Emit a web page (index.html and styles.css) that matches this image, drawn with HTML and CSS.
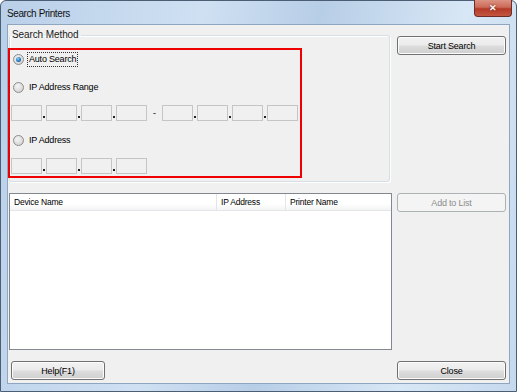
FILE: index.html
```html
<!DOCTYPE html>
<html lang="en">

<head>
    <meta charset="UTF-8">
    <title>Search Printers</title>
    <link rel="stylesheet" href="styles.css">
</head>

<body>

    <div class="window">

        <!-- title bar -->
        <div class="titlebar">
            <span class="title">Search Printers</span>
            <div class="close_x">&#x2715;</div>
        </div>

        <div class="client">

            <!-- search method -->
            <fieldset class="group">
                <legend>Search Method</legend>
                <div class="mark">
                    <div class="opt opt1">
                        <span class="radio on"></span>
                        <span class="label focus">Auto Search</span>
                    </div>
                    <div class="opt opt2">
                        <span class="radio"></span>
                        <span class="label">IP Address Range</span>
                    </div>
                    <div class="ip_row ip1">
                        <span class="ip_box"></span><span class="dot"></span>
                        <span class="ip_box"></span><span class="dot"></span>
                        <span class="ip_box"></span><span class="dot"></span>
                        <span class="ip_box"></span>
                        <span class="dash">-</span>
                        <span class="ip_box"></span><span class="dot"></span>
                        <span class="ip_box"></span><span class="dot"></span>
                        <span class="ip_box"></span><span class="dot"></span>
                        <span class="ip_box"></span>
                    </div>
                    <div class="opt opt3">
                        <span class="radio"></span>
                        <span class="label">IP Address</span>
                    </div>
                    <div class="ip_row ip2">
                        <span class="ip_box"></span><span class="dot"></span>
                        <span class="ip_box"></span><span class="dot"></span>
                        <span class="ip_box"></span><span class="dot"></span>
                        <span class="ip_box"></span>
                    </div>
                </div>
            </fieldset>

            <div class="side side_top">
                <button class="btn">Start Search</button>
            </div>

            <!-- device list -->
            <div class="listview">
                <div class="list_head">
                    <div class="col col1">Device Name</div>
                    <div class="col col2">IP Address</div>
                    <div class="col col3">Printer Name</div>
                </div>
            </div>

            <div class="side">
                <button class="btn" disabled>Add to List</button>
            </div>

            <div class="bottom">
                <button class="btn help">Help(F1)</button>
            </div>

            <div class="side">
                <button class="btn">Close</button>
            </div>

        </div>
    </div>

</body>

</html>
```

FILE: styles.css
```css
* {
    box-sizing: border-box;
}

body {
    margin: 0;
    font-family: "Liberation Sans", Arial, sans-serif;
    font-size: 9px;
    letter-spacing: -0.2px;
    color: #000;
}

.window {
    width: 517px;
    height: 392px;
    border: 1px solid #4b5e73;
    border-radius: 6px 6px 0 0;
    background: linear-gradient(100deg, #b9d0e9 0%, #cfe0f2 35%, #b7cee7 55%, #d8e7f5 80%, #c5d9ee 100%);
    display: flex;
    flex-direction: column;
}

/* title bar */
.titlebar {
    height: 23px;
    display: flex;
    justify-content: space-between;
    align-items: flex-start;
}

.title {
    font-size: 10px;
    letter-spacing: -0.4px;
    margin-left: 6px;
    margin-top: 7px;
    color: #111;
}

.close_x {
    width: 38px;
    height: 17px;
    margin-top: -1px;
    margin-right: 4px;
    border: 1px solid #6e2c28;
    border-top: none;
    border-radius: 0 0 4px 4px;
    background: linear-gradient(#dc9383 0%, #cc6a58 45%, #b43a28 55%, #c35640 100%);
    color: #fff;
    font-size: 9px;
    font-weight: bold;
    text-align: center;
    line-height: 16px;
    text-shadow: 0 0 2px #5a1a12;
}

/* client area */
.client {
    flex: 1;
    margin: 0 6px 7px 6px;
    border: 1px solid #8ea6c0;
    background-color: #f0f0f0;
    display: grid;
    grid-template-columns: 383px 109px;
    grid-template-rows: auto auto 1fr;
    column-gap: 5px;
    row-gap: 11px;
    padding: 4px 0 0 1px;
}

.side_top {
    padding-top: 7px;
}

.group {
    width: 381px;
    margin: 0;
    padding: 0;
    border: 1px solid #d5dfe5;
    border-radius: 3px;
    box-shadow: inset 1px 1px 0 #fff, 1px 1px 0 #fff;
}

.group legend {
    font-size: 10px;
    letter-spacing: -0.1px;
    line-height: 12px;
    padding: 0 2px;
    margin-left: 0;
    color: #222;
}

/* red highlight frame */
.mark {
    width: 294px;
    height: 130px;
    margin: 7px 0 3px -2px;
    border: 2px solid #ee0000;
    padding: 2px 0 0 1px;
}

.opt {
    height: 14px;
    display: flex;
    align-items: center;
    padding-left: 2px;
}

.opt2 {
    margin-top: 14px;
}

.opt3 {
    margin-top: 12px;
}

.radio {
    width: 11px;
    height: 11px;
    border-radius: 50%;
    border: 1px solid #8c8c8c;
    background: radial-gradient(circle at 40% 35%, #f4f4f4 0%, #dcdcdc 60%, #c4c4c4 100%);
    margin-right: 3px;
    position: relative;
}

.radio.on::after {
    content: "";
    position: absolute;
    left: 2px;
    top: 2px;
    width: 5px;
    height: 5px;
    border-radius: 50%;
    background: radial-gradient(circle at 40% 35%, #9fd3f5 0%, #2a7fc4 50%, #0d3e7a 100%);
}

.label {
    padding: 1px 1px;
    line-height: 11px;
    border: 1px solid transparent;
}

.label.focus {
    border: 1px dotted #333;
}

.ip_row {
    display: flex;
    align-items: flex-end;
    height: 16px;
}

.ip1 {
    margin-top: 11px;
}

.ip2 {
    margin-top: 11px;
}

.ip_box {
    width: 31px;
    height: 16px;
    border: 1px solid #c5c5c5;
    background-color: #f0f0f0;
}

.dot {
    width: 4px;
    height: 16px;
    position: relative;
}

.dot::after {
    content: "";
    position: absolute;
    left: 1px;
    bottom: 3px;
    width: 2px;
    height: 2px;
    background-color: #222;
}

.dash {
    width: 15px;
    text-align: center;
    line-height: 16px;
    align-self: center;
}

/* list view */
.listview {
    height: 157px;
    border: 1px solid #828790;
    background-color: #fff;
}

.list_head {
    display: flex;
    height: 17px;
    border-bottom: 1px solid #e5e5e5;
    background: linear-gradient(#ffffff 0%, #ffffff 60%, #f3f4f5 100%);
    font-size: 8.5px;
}

.col {
    line-height: 16px;
    padding-left: 4px;
    border-right: 1px solid #e3e5e8;
}

.col1 {
    width: 207px;
}

.col2 {
    width: 69px;
}

.col3 {
    width: 105px;
    border-right: none;
}

/* buttons */
.btn {
    width: 109px;
    height: 19px;
    padding: 0;
    font-family: "Liberation Sans", Arial, sans-serif;
    font-size: 9px;
    letter-spacing: -0.2px;
    color: #000;
    border: 1px solid #707070;
    border-radius: 3px;
    background: linear-gradient(#f2f2f2 0%, #ebebeb 48%, #dddddd 52%, #cfcfcf 100%);
    box-shadow: inset 0 0 0 1px #fcfcfc;
}

.btn:disabled {
    color: #8d8d8d;
    border-color: #adb2b5;
    background: #f4f4f4;
    box-shadow: none;
}

.bottom {
    padding-left: 2px;
}

.help {
    width: 94px;
}
```
